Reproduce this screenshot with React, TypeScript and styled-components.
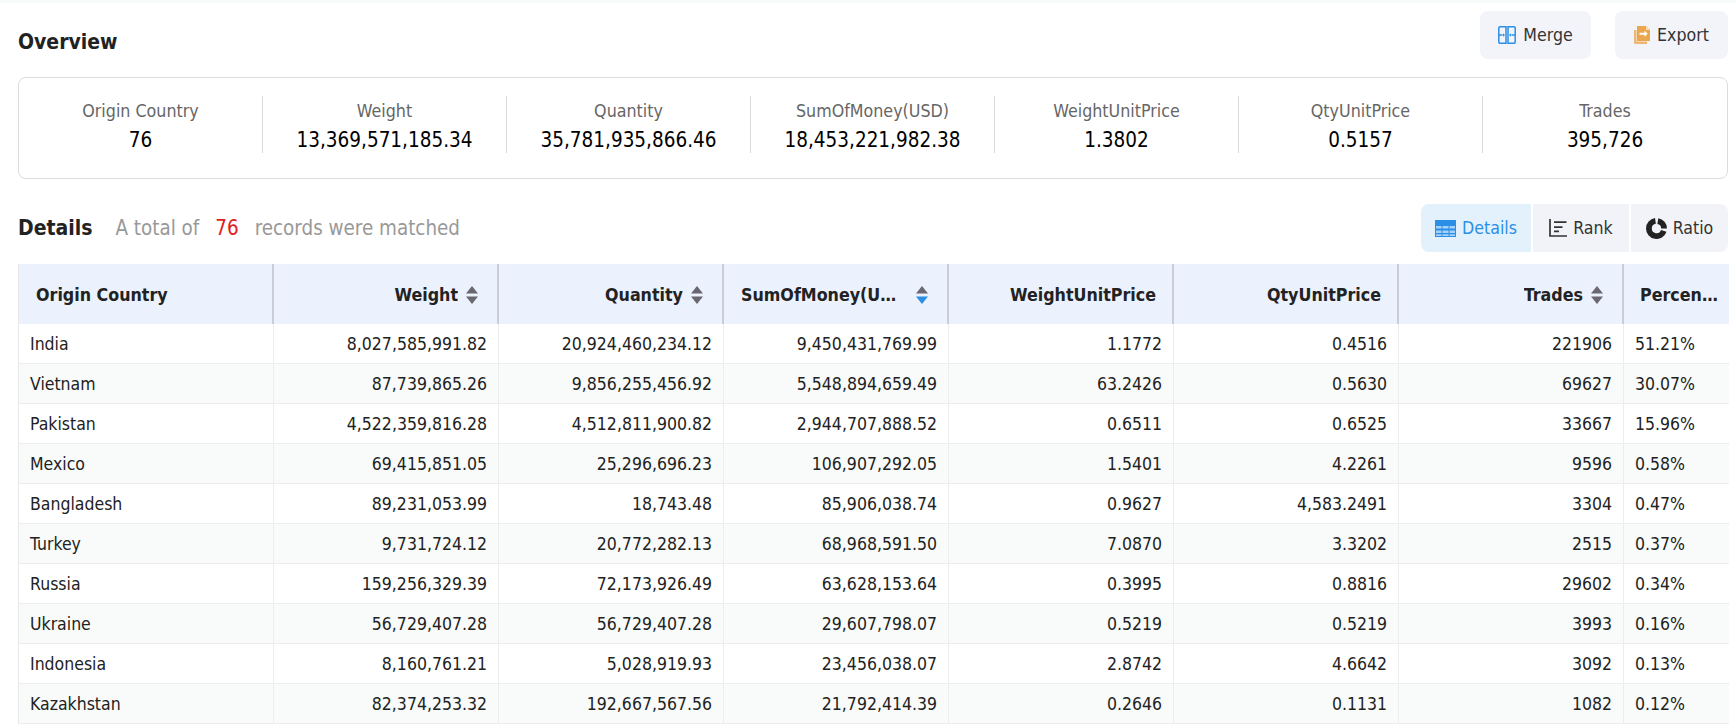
import React from 'react';
import styled, { createGlobalStyle } from 'styled-components';

const GlobalStyle = createGlobalStyle`
  html, body {
    margin: 0;
    padding: 0;
    background: #fff;
  }
  body {
    font-family: 'DejaVu Sans Condensed', 'DejaVu Sans', 'Noto Sans', sans-serif;
    color: #222;
  }
`;

const Page = styled.div`
  width: 1736px;
  height: 724px;
  overflow: hidden;
  box-sizing: border-box;
  border-top: 3px solid #f7fbf8;
  padding: 8px 8px 0 18px;
`;

const SectionHead = styled.div`
  display: flex;
  align-items: center;
  justify-content: space-between;
  height: 48px;
`;

const Title = styled.h2`
  margin: 0;
  font-size: 21px;
  font-weight: 700;
  color: #222;
`;

const OverviewTitle = styled(Title)`
  padding-top: 14px;
`;

const ActionGroup = styled.div`
  display: flex;
  gap: 24px;
`;

const ActionButton = styled.button<{ $width: number }>`
  display: flex;
  align-items: center;
  justify-content: center;
  gap: 7px;
  width: ${props => props.$width}px;
  height: 48px;
  padding: 0;
  border: none;
  border-radius: 8px;
  background: #f2f4fa;
  color: #333;
  font: inherit;
  font-size: 17.6px;
`;

const StatsCard = styled.div`
  display: grid;
  grid-template-columns: repeat(7, 1fr);
  align-items: start;
  box-sizing: border-box;
  height: 102px;
  margin-top: 18px;
  padding-top: 18px;
  border: 1px solid #dcdcdc;
  border-radius: 8px;
`;

const Stat = styled.div`
  display: flex;
  flex-direction: column;
  align-items: center;
  box-sizing: border-box;
  height: 57px;
  padding-top: 1px;
  border-right: 1px solid #d9d9d9;

  &:last-child {
    border-right: none;
  }
`;

const StatLabel = styled.div`
  font-size: 17.7px;
  line-height: 28px;
  color: #666;
`;

const StatValue = styled.div`
  font-size: 20.5px;
  line-height: 30px;
  color: #000;
`;

const DetailsHead = styled(SectionHead)`
  margin-top: 25px;
`;

const Summary = styled.div`
  display: flex;
  align-items: center;
`;

const SummaryText = styled.span`
  margin-left: 23px;
  font-size: 20.4px;
  color: #999;
`;

const SummaryCount = styled.span`
  margin: 0 16px;
  color: #e02020;
`;

const ViewSwitch = styled.div`
  display: flex;
  gap: 2px;
  border-radius: 8px;
  overflow: hidden;
`;

const ViewTab = styled.div<{ $active?: boolean; $width: number }>`
  display: flex;
  align-items: center;
  justify-content: center;
  gap: 6px;
  width: ${props => props.$width}px;
  height: 48px;
  font-size: 17.6px;
  background: ${props => (props.$active ? '#e3f1fd' : '#f2f3f9')};
  color: ${props => (props.$active ? '#2b8fe6' : '#333')};
`;

const Table = styled.table`
  width: 1710px;
  margin-top: 12px;
  table-layout: fixed;
  border-collapse: separate;
  border-spacing: 0;
  border-left: 1px solid #e8e8e8;
`;

const HeadCell = styled.th<{ $align?: string }>`
  box-sizing: border-box;
  height: 60px;
  padding: 1px 16px 0 18px;
  background: #ebf1fd;
  border-right: 2px solid #c9cdd9;
  font-size: 17.7px;
  font-weight: 700;
  color: #222;
  text-align: ${props => props.$align || 'right'};

  &:first-child {
    padding-left: 17px;
  }

  &:last-child {
    border-right: none;
    padding: 1px 6px 0 16px;
  }
`;

const HeadInner = styled.div<{ $align?: string }>`
  display: flex;
  align-items: center;
  justify-content: ${props => (props.$align === 'left' ? 'flex-start' : 'flex-end')};
  gap: 8px;
`;

const HeadLabel = styled.span<{ $maxWidth?: number }>`
  overflow: hidden;
  white-space: nowrap;
  text-overflow: ellipsis;
  ${props => props.$maxWidth && `flex: none; width: ${props.$maxWidth}px; margin-right: 7px;`}
`;

const SortWrap = styled.span`
  display: flex;
  flex: none;
  margin-right: 3px;
`;

const Row = styled.tr<{ $striped: boolean }>`
  background: ${props => (props.$striped ? '#f8fbf9' : '#fff')};
`;

const Cell = styled.td<{ $align?: string }>`
  box-sizing: border-box;
  height: 40px;
  padding: ${props => (props.$align === 'left' ? '0 12px 0 11px' : '0 11px 0 12px')};
  border-right: 1px solid #ededed;
  border-bottom: 1px solid #ededed;
  font-size: 17.5px;
  color: #222;
  text-align: ${props => props.$align || 'right'};
  white-space: nowrap;
  overflow: hidden;

  &:last-child {
    border-right: none;
  }
`;

const MergeIcon = () => (
  <svg width="18" height="18" viewBox="0 0 18 18" fill="none" stroke="#2b8fe6" strokeWidth="1.5">
    <path d="M8 .8H2A1.2 1.2 0 0 0 .8 2v14A1.2 1.2 0 0 0 2 17.2h6zM10 .8h6A1.2 1.2 0 0 1 17.2 2v14a1.2 1.2 0 0 1-1.2 1.2h-6z" />
    <path d="M.8 9H4.500M13.500 9h3.700" />
    <path d="M5 7.200 7 9l-2 1.800zM13 7.200 11 9l2 1.800z" fill="#2b8fe6" stroke="none" />
  </svg>
);

const ExportIcon = () => (
  <svg width="16" height="18" viewBox="0 0 16 18">
    <path d="M0 4h2.500v11.500H13V18H1.200A1.200 1.200 0 0 1 0 16.800z" fill="#efb672" />
    <path d="M3 0h9l4 4v11H3z" fill="#eba74e" />
    <path d="M12 0l4 4h-4z" fill="#f8dcb4" />
    <path d="M5.500 6.800h5V4.800l3.200 3-3.200 3v-2h-5z" fill="#fff" />
  </svg>
);

const TableIcon = () => (
  <svg width="21" height="17" viewBox="0 0 21 17">
    <path d="M0 0h21v17H0z" fill="#2b8fe6" />
    <path
      d="M1 6h5.500v2.500H1zM7.500 6h6v2.500h-6zM14.500 6H20v2.500h-5.500zM1 10.500h5.500V13H1zM7.500 10.500h6V13h-6zM14.500 10.500H20V13h-5.500zM1 14.200h5.500V16H1zM7.500 14.200h6V16h-6zM14.500 14.200H20V16h-5.500z"
      fill="#a6d2f7"
    />
  </svg>
);

const RankIcon = () => (
  <svg width="18" height="18" viewBox="0 0 18 18" fill="none" stroke="#333" strokeWidth="1.7">
    <path d="M1 0v17h17" />
    <path d="M5 3.200h12.500M5 8.200h8.500M5 12.400h5" />
  </svg>
);

const RatioIcon = () => (
  <svg width="21" height="21" viewBox="0 0 21 21" fill="none" stroke="#222" strokeWidth="5.800">
    <path d="M11.820 3.020A7.600 7.600 0 0 1 18.100 10.500" />
    <path d="M17.730 12.850A7.600 7.600 0 1 1 9.440 2.970" />
  </svg>
);

const SortIcon = ({ active }: { active?: boolean }) => (
  <SortWrap>
    <svg width="12" height="18" viewBox="0 0 12 18">
      <path d="M6 0l6 7.500H0z" fill="#6b6770" />
      <path d="M6 18l6-7.500H0z" fill={active ? '#2b8fe6' : '#6b6770'} />
    </svg>
  </SortWrap>
);

const stats = [
  ['Origin Country', '76'],
  ['Weight', '13,369,571,185.34'],
  ['Quantity', '35,781,935,866.46'],
  ['SumOfMoney(USD)', '18,453,221,982.38'],
  ['WeightUnitPrice', '1.3802'],
  ['QtyUnitPrice', '0.5157'],
  ['Trades', '395,726'],
];

interface IColumn {
  label: string;
  width: number;
  align?: string;
  sort?: boolean;
  active?: boolean;
  labelWidth?: number;
}

const columns: IColumn[] = [
  { label: 'Origin Country', width: 255, align: 'left' },
  { label: 'Weight', width: 225, sort: true },
  { label: 'Quantity', width: 225, sort: true },
  { label: 'SumOfMoney(USD)', width: 225, sort: true, active: true, labelWidth: 160 },
  { label: 'WeightUnitPrice', width: 225 },
  { label: 'QtyUnitPrice', width: 225 },
  { label: 'Trades', width: 225, sort: true },
  { label: 'Percentage', width: 105, align: 'left' },
];

const rows = [
  ['India', '8,027,585,991.82', '20,924,460,234.12', '9,450,431,769.99', '1.1772', '0.4516', '221906', '51.21%'],
  ['Vietnam', '87,739,865.26', '9,856,255,456.92', '5,548,894,659.49', '63.2426', '0.5630', '69627', '30.07%'],
  ['Pakistan', '4,522,359,816.28', '4,512,811,900.82', '2,944,707,888.52', '0.6511', '0.6525', '33667', '15.96%'],
  ['Mexico', '69,415,851.05', '25,296,696.23', '106,907,292.05', '1.5401', '4.2261', '9596', '0.58%'],
  ['Bangladesh', '89,231,053.99', '18,743.48', '85,906,038.74', '0.9627', '4,583.2491', '3304', '0.47%'],
  ['Turkey', '9,731,724.12', '20,772,282.13', '68,968,591.50', '7.0870', '3.3202', '2515', '0.37%'],
  ['Russia', '159,256,329.39', '72,173,926.49', '63,628,153.64', '0.3995', '0.8816', '29602', '0.34%'],
  ['Ukraine', '56,729,407.28', '56,729,407.28', '29,607,798.07', '0.5219', '0.5219', '3993', '0.16%'],
  ['Indonesia', '8,160,761.21', '5,028,919.93', '23,456,038.07', '2.8742', '4.6642', '3092', '0.13%'],
  ['Kazakhstan', '82,374,253.32', '192,667,567.56', '21,792,414.39', '0.2646', '0.1131', '1082', '0.12%'],
];

export default function App() {
  return (
    <Page>
      <GlobalStyle />
      <SectionHead>
        <OverviewTitle>Overview</OverviewTitle>
        <ActionGroup>
          <ActionButton $width={111}>
            <MergeIcon />
            Merge
          </ActionButton>
          <ActionButton $width={113}>
            <ExportIcon />
            Export
          </ActionButton>
        </ActionGroup>
      </SectionHead>

      <StatsCard>
        {stats.map(([label, value]) => (
          <Stat key={label}>
            <StatLabel>{label}</StatLabel>
            <StatValue>{value}</StatValue>
          </Stat>
        ))}
      </StatsCard>

      <DetailsHead>
        <Summary>
          <Title>Details</Title>
          <SummaryText>
            A total of<SummaryCount>76</SummaryCount>records were matched
          </SummaryText>
        </Summary>
        <ViewSwitch>
          <ViewTab $active $width={110}>
            <TableIcon />
            Details
          </ViewTab>
          <ViewTab $width={96}>
            <RankIcon />
            Rank
          </ViewTab>
          <ViewTab $width={97}>
            <RatioIcon />
            Ratio
          </ViewTab>
        </ViewSwitch>
      </DetailsHead>

      <Table>
        <colgroup>
          {columns.map(col => (
            <col key={col.label} width={col.width} />
          ))}
        </colgroup>
        <thead>
          <tr>
            {columns.map(col => (
              <HeadCell key={col.label} $align={col.align}>
                <HeadInner $align={col.align}>
                  <HeadLabel $maxWidth={col.labelWidth}>{col.label}</HeadLabel>
                  {col.sort && <SortIcon active={col.active} />}
                </HeadInner>
              </HeadCell>
            ))}
          </tr>
        </thead>
        <tbody>
          {rows.map((row, index) => (
            <Row key={row[0]} $striped={index % 2 === 1}>
              {row.map((value, cellIndex) => (
                <Cell key={cellIndex} $align={cellIndex === 0 || cellIndex === 7 ? 'left' : 'right'}>
                  {value}
                </Cell>
              ))}
            </Row>
          ))}
        </tbody>
      </Table>
    </Page>
  );
}
